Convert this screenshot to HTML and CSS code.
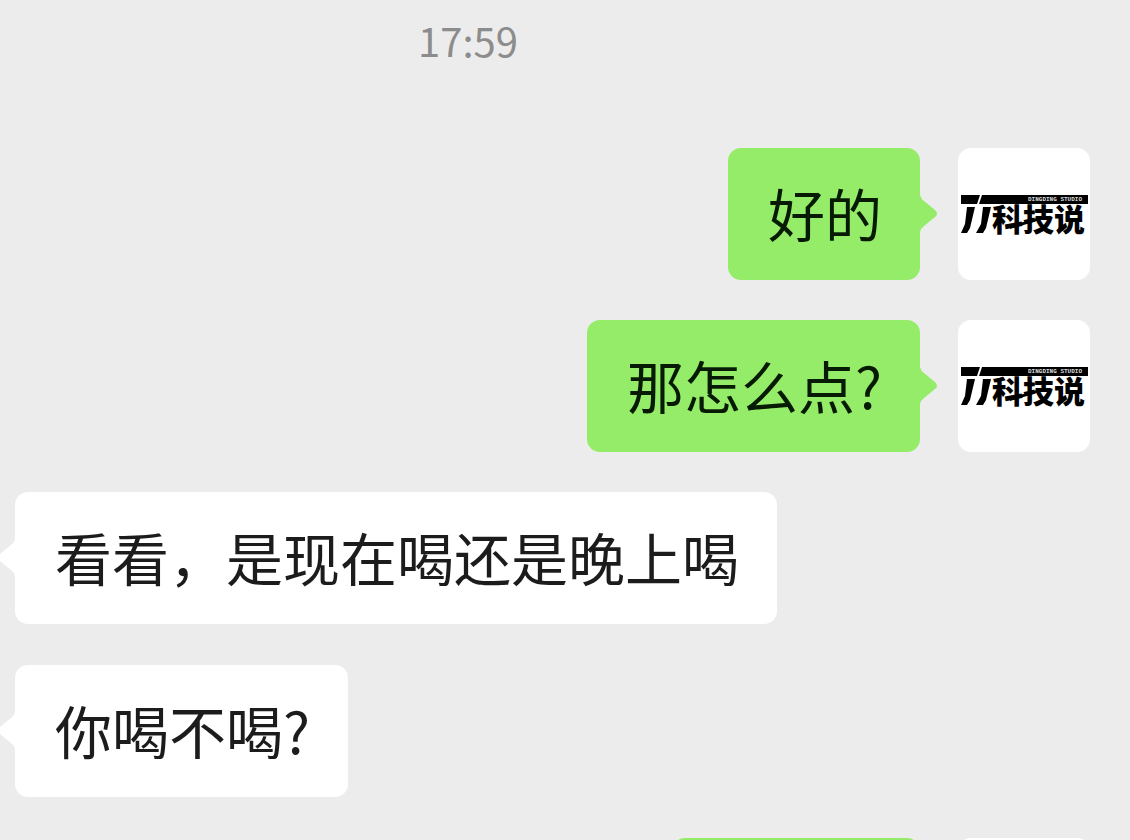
FILE: index.html
```html
<!DOCTYPE html>
<html lang="zh-CN">
<head>
<meta charset="utf-8">
<meta name="viewport" content="width=device-width, initial-scale=1">
<title>聊天</title>
<link rel="stylesheet" href="styles.css">
</head>
<body>
<svg class="defs" aria-hidden="true">
  <symbol id="tail" viewBox="0 0 18 38">
    <path d="M0 0Q1 4 4 6L15 15Q19 19 15 22L4 31Q1 33 0 37Z"/>
  </symbol>
</svg>
<main class="chat">
  <time class="time" datetime="17:59">17:59</time>
  <div class="messages">
    <div class="row sent">
      <p class="bubble">好的<svg class="tail"><use href="#tail"/></svg></p>
      <svg class="avatar" viewBox="0 0 132 132" role="img" aria-label="丁丁科技说">
        <path d="M3 47H22L19 56H3ZM24 47H130V56H21Z"/>
        <path d="M9 59H17L12 80L9 85H3L7 76ZM25 59H33L28 80L25 85H18L23 76Z"/>
        <text class="logo-name" x="34" y="83">科技说</text>
        <path d="M52 78L82 69V72L52 81Z"/>
        <text class="logo-sub" x="70" y="53">DINGDING STUDIO</text>
      </svg>
    </div>
    <div class="row sent">
      <p class="bubble">那怎么点?<svg class="tail"><use href="#tail"/></svg></p>
      <svg class="avatar" viewBox="0 0 132 132" role="img" aria-label="丁丁科技说">
        <path d="M3 47H22L19 56H3ZM24 47H130V56H21Z"/>
        <path d="M9 59H17L12 80L9 85H3L7 76ZM25 59H33L28 80L25 85H18L23 76Z"/>
        <text class="logo-name" x="34" y="83">科技说</text>
        <path d="M52 78L82 69V72L52 81Z"/>
        <text class="logo-sub" x="70" y="53">DINGDING STUDIO</text>
      </svg>
    </div>
    <div class="row received">
      <p class="bubble">看看，是现在喝还是晚上喝<svg class="tail"><use href="#tail"/></svg></p>
    </div>
    <div class="row received">
      <p class="bubble">你喝不喝?<svg class="tail"><use href="#tail"/></svg></p>
    </div>
    <div class="row sent">
      <p class="bubble pending"></p>
      <div class="avatar"></div>
    </div>
  </div>
</main>
</body>
</html>
```
FILE: styles.css
```css
* {
  box-sizing: border-box;
}

body {
  margin: 0;
  background: #ececec;
  color: #1c1c1c;
  font-family: "Noto Sans CJK SC", sans-serif;
}

.defs {
  position: absolute;
  width: 0;
  height: 0;
}

.chat {
  display: flex;
  flex-direction: column;
  gap: 78px;
  height: 100vh;
  padding: 10px 40px 0 15px;
  overflow: hidden;
}

.time {
  padding-right: 169px;
  color: #8c8c8c;
  font-size: 40px;
  line-height: 60px;
  text-align: center;
}

.messages {
  display: flex;
  flex-direction: column;
  gap: 40px;
}

.row {
  display: flex;
  gap: 38px;
}

.sent {
  justify-content: flex-end;
}

.received {
  padding-bottom: 1px;
}

.bubble {
  position: relative;
  min-height: 132px;
  margin: 0;
  padding: 22px 38px 26px 40px;
  border-radius: 13px;
  background: #fff;
  font-size: 57px;
  line-height: 84px;
}

.sent .bubble {
  background: #95ec69;
  color: #071a03;
}

.pending {
  min-width: 248px;
}

.tail {
  position: absolute;
  top: 47px;
  right: 100%;
  width: 18px;
  height: 38px;
  fill: #fff;
  transform: scaleX(-1);
}

.sent .tail {
  right: auto;
  left: 100%;
  fill: #95ec69;
  transform: none;
}

.avatar {
  flex: none;
  width: 132px;
  height: 132px;
  border-radius: 13px;
  background: #fff;
}

.logo-name {
  fill: #000;
  font-size: 31px;
  font-weight: 900;
}

.logo-sub {
  fill: #ddd;
  font-family: "Liberation Mono", monospace;
  font-size: 6px;
  font-weight: 700;
}
```
